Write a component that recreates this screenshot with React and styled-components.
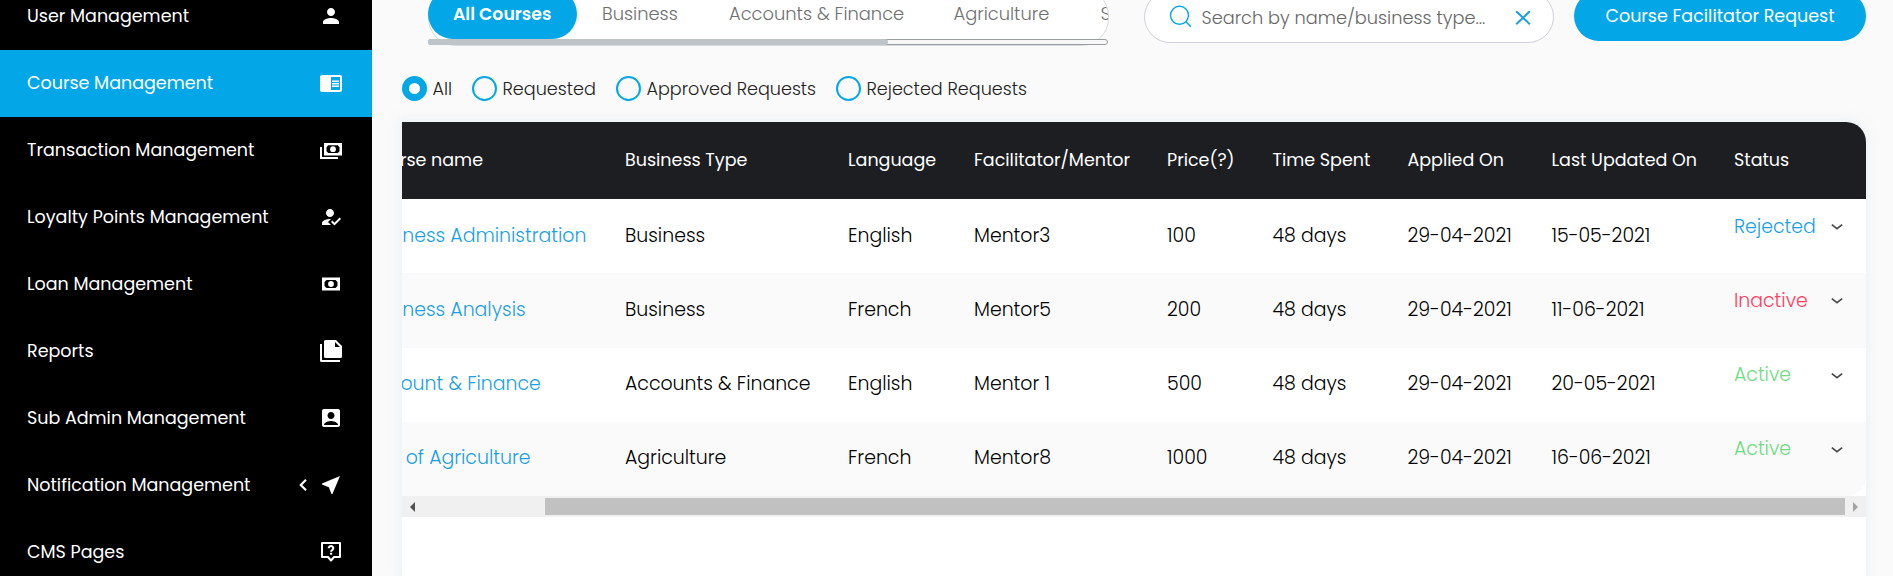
import React from "react";
import styled, { createGlobalStyle } from "styled-components";
import { MdPerson, MdChromeReaderMode, MdHowToReg, MdAccountBox, MdNearMe } from "react-icons/md";

const GlobalStyle = createGlobalStyle`
  * { box-sizing: border-box; }
  body { margin: 0; background: #fafafa; font-family: Poppins, Inter, "Open Sans", sans-serif; }
`;

const Text = styled.span`
  white-space: pre;
`;

const Page = styled.div`
  display: flex;
  width: 100%;
  height: 576px;
  overflow: hidden;
  background: #fafafa;
`;

const Sidebar = styled.nav`
  flex: 0 0 372px;
  background: #000;
  overflow: hidden;
`;

const MenuList = styled.div`
  display: flex;
  flex-direction: column;
  margin-top: -17px;
`;

const MenuItem = styled.a`
  display: flex;
  align-items: center;
  flex-shrink: 0;
  height: 67px;
  padding: 0 29px 2px 27px;
  color: #fff;
  font-size: 17.5px;
  background: ${(p) => (p.$active ? "#03a7e8" : "transparent")};
  svg { display: block; }
`;

const MenuIcons = styled.span`
  display: flex;
  align-items: center;
  gap: 10px;
  margin-left: auto;
`;

const Main = styled.main`
  display: flex;
  flex-direction: column;
  flex: 1;
  min-width: 0;
  padding: 0 27px 0 30px;
`;

const Toolbar = styled.div`
  display: flex;
  align-items: flex-start;
  flex: 0 0 88px;
  margin-top: -12px;
  padding-left: 26px;
`;

const TabsBox = styled.div`
  display: flex;
  flex-direction: column;
  width: 681px;
  height: 58px;
  border: 1px solid #d5d8dc;
  border-radius: 28px;
  background: #fff;
`;

const Tabs = styled.div`
  display: flex;
  height: 50px;
  margin-left: -1px;
  overflow: hidden;
  border-radius: 0 27px 0 0;
`;

const Tab = styled.button`
  flex: none;
  width: ${(p) => p.$w}px;
  height: 50px;
  padding: 0 0 1px 25px;
  border: 0;
  border-radius: 25px;
  text-align: left;
  font-family: inherit;
  font-size: ${(p) => (p.$active ? 17.3 : 17.85)}px;
  font-weight: ${(p) => (p.$active ? 600 : 300)};
  color: ${(p) => (p.$active ? "#fff" : "#6f6f6f")};
  background: ${(p) => (p.$active ? "#03a7e8" : "transparent")};
`;

const TabTrack = styled.div`
  flex: none;
  width: 680px;
  height: 6px;
  margin-left: -1px;
  border: 1px solid #9b9ea0;
  border-radius: 3px;
  background: #f7f7f7;
`;

const TabThumb = styled.div`
  width: 460px;
  height: 6px;
  margin: -1px 0 0 -1px;
  border-radius: 3px;
  background: #bfc4c8;
`;

const SearchBox = styled.label`
  display: flex;
  align-items: center;
  width: 410px;
  height: 52px;
  margin: 3px 0 0 35px;
  padding: 0 22px 0 24px;
  border: 1px solid #ced0da;
  border-radius: 26px;
  background: #fff;
  color: #666;
  font-size: 17.75px;
  font-weight: 300;
  svg { display: block; flex: none; }
`;

const SearchHint = styled(Text)`
  flex: 1;
  margin-left: 8.5px;
`;

const RequestButton = styled.button`
  width: 292px;
  height: 50px;
  margin: 3px 0 0 20px;
  padding: 0;
  border: 0;
  border-radius: 25px;
  background: #03a7e8;
  color: #fff;
  font-family: inherit;
  font-size: 17.5px;
`;

const Filters = styled.div`
  display: flex;
  height: 46px;
`;

const Filter = styled.label`
  display: flex;
  align-items: center;
  height: 25px;
  width: ${(p) => p.$w}px;
  gap: 5.5px;
  color: #222;
  font-size: 17.6px;
  font-weight: 300;
`;

const Radio = styled.span`
  flex: none;
  width: 25px;
  height: 25px;
  border-radius: 50%;
  border: ${(p) => (p.$on ? "7.5px" : "2px")} solid #03a7e8;
  background: ${(p) => (p.$on ? "#fff" : "transparent")};
`;

const Card = styled.section`
  flex: 1;
  background: #fff;
  border-radius: 0 20px 0 0;
  box-shadow: 0 0 8px 3px rgba(225, 238, 246, 0.5);
`;

const TableClip = styled.div`
  overflow: hidden;
  border-radius: 0 20px 20px 0;
`;

const Table = styled.div`
  width: 1502px;
  margin-left: -38px;
`;

const Row = styled.div`
  display: grid;
  grid-template-columns: 261px 223px 126px 193px 105.5px 135px 144px 182.5px 1fr;
  align-items: center;
  height: 74.25px;
  padding-bottom: 2px;
  background: ${(p) => (p.$alt ? "#fafafa" : "#fff")};
  color: #000;
  font-size: 18.9px;
  font-weight: 300;
`;

const HeadRow = styled(Row)`
  height: 77px;
  background: #1d1e22;
  color: #fff;
  font-size: 17.5px;
  font-weight: 400;
`;

const CourseLink = styled(Text)`
  margin-left: 1px;
  color: #1a9fe4;
`;

const Status = styled.div`
  display: flex;
  align-items: center;
  justify-content: space-between;
  padding: 0 23px 18px 0;
  color: ${(p) => p.$color};
  svg { display: block; margin-top: 2px; }
`;

const ScrollBar = styled.div`
  display: flex;
  align-items: center;
  height: 21px;
  padding: 0 8px;
  background: #f0f0f0;
`;

const ScrollThumb = styled.div`
  width: 1300px;
  height: 17px;
  margin-left: 130px;
  background: #c1c1c1;
`;

const Arrow = styled.span`
  width: 0;
  height: 0;
  border: 5px solid transparent;
  border-left-width: ${(p) => (p.$left ? 0 : 5)}px;
  border-right-width: ${(p) => (p.$left ? 5 : 0)}px;
  border-${(p) => (p.$left ? "right" : "left")}-color: ${(p) => (p.$left ? "#505050" : "#a3a3a3")};
  margin-left: ${(p) => (p.$left ? 0 : 8)}px;
`;

const CashIcon = () => (
  <svg width="24" height="24" viewBox="0 0 24 24" fill="#fff">
    <path fillRule="evenodd" d="M3 5.5h18v13H3z M7.5 8L5.5 10v4l2 2h9l2-2v-4l-2-2z" />
    <circle cx="12" cy="12" r="2.9" />
  </svg>
);

const CashStackIcon = () => (
  <svg width="24" height="24" viewBox="0 0 24 24" fill="#fff">
    <path fillRule="evenodd" d="M5 5h18v12.5H5z M9.2 7.3L7.5 9.2v4l1.7 1.9h9.6l1.7-1.9v-4l-1.7-1.9z" />
    <circle cx="14" cy="11.2" r="2.9" />
    <path d="M1 9h2v10h16v2H1z" />
  </svg>
);

const FilesIcon = () => (
  <svg width="24" height="24" viewBox="0 0 24 24" fill="#fff">
    <path fillRule="evenodd" d="M6.5 1H17l6 6v10.5a1.5 1.5 0 0 1-1.5 1.5h-15A1.5 1.5 0 0 1 5 17.5V2.5A1.5 1.5 0 0 1 6.5 1z M16 3v5h5z" />
    <path d="M1 5h2v16h18v2H2.5A1.5 1.5 0 0 1 1 21.5z" />
  </svg>
);

const HelpIcon = () => (
  <svg width="24" height="24" viewBox="0 0 24 24" fill="none" stroke="#fff">
    <path strokeWidth="2" strokeLinejoin="round" d="M3 3h18v14h-6l-3 3.5-3-3.5H3z" />
    <path strokeWidth="2.1" d="M9.7 8.3a2.3 2.1 0 1 1 3.8 1.5c-.9.7-1.4 1-1.4 1.9M12.1 12.8v2" />
  </svg>
);

const BackIcon = () => (
  <svg width="12" height="14" viewBox="0 0 12 14" fill="none" stroke="#fff" strokeWidth="2.2">
    <path d="M9 1.8 3.8 7 9 12.2" />
  </svg>
);

const SearchIcon = () => (
  <svg width="24" height="24" viewBox="0 0 24 24" fill="none" stroke="#03a7e8" strokeWidth="1.4">
    <circle cx="10.5" cy="10.3" r="9" />
    <path d="m16.9 16.7 5 5" />
  </svg>
);

const ClearIcon = () => (
  <svg width="16" height="16" viewBox="0 0 16 16" fill="none" stroke="#1a9fe4" strokeWidth="2">
    <path d="m1.2 2.2 13.6 13M14.8 2.2 1.2 15.2" />
  </svg>
);

const ChevronIcon = () => (
  <svg width="12" height="8" viewBox="0 0 12 8" fill="none" stroke="#4a4a4a" strokeWidth="1.7">
    <path d="m.8 1.6 5.2 4 5.2-4" />
  </svg>
);

const MENU = [
  ["User Management", <MdPerson size={24} />],
  ["Course Management", <MdChromeReaderMode size={24} />],
  ["Transaction Management", <CashStackIcon />],
  ["Loyalty Points Management", <MdHowToReg size={24} />],
  ["Loan Management", <CashIcon />],
  ["Reports", <FilesIcon />],
  ["Sub Admin Management", <MdAccountBox size={24} />],
  ["Notification Management", <MdNearMe size={24} />],
  ["CMS Pages", <HelpIcon />],
];

const TABS = [
  ["All Courses", 149],
  ["Business", 127],
  ["Accounts & Finance", 224.5],
  ["Agriculture", 147],
  ["Services", 140],
];

const FILTERS = [
  ["All", 70],
  ["Requested", 144],
  ["Approved Requests", 220],
  ["Rejected Requests", 200],
];

const HEADERS = [
  "Course name",
  "Business Type",
  "Language",
  "Facilitator/Mentor",
  "Price(?)",
  "Time Spent",
  "Applied On",
  "Last Updated On",
  "Status",
];

const STATUS_COLORS = { Rejected: "#1a9fe4", Inactive: "#ff3d60", Active: "#6fdc82" };

const ROWS = [
  ["Business Administration", "Business", "English", "Mentor3", "100", "48 days", "29-04-2021", "15-05-2021", "Rejected"],
  ["Business Analysis", "Business", "French", "Mentor5", "200", "48 days", "29-04-2021", "11-06-2021", "Inactive"],
  ["Account & Finance", "Accounts & Finance", "English", "Mentor 1", "500", "48 days", "29-04-2021", "20-05-2021", "Active"],
  ["Arts of Agriculture", "Agriculture", "French", "Mentor8", "1000", "48 days", "29-04-2021", "16-06-2021", "Active"],
];

export default function App() {
  return (
    <Page>
      <GlobalStyle />
      <Sidebar>
        <MenuList>
          {MENU.map(([label, icon]) => (
            <MenuItem key={label} $active={label === "Course Management"}>
              <Text>{label}</Text>
              <MenuIcons>
                {label === "Notification Management" && <BackIcon />}
                {icon}
              </MenuIcons>
            </MenuItem>
          ))}
        </MenuList>
      </Sidebar>
      <Main>
        <Toolbar>
          <TabsBox>
            <Tabs>
              {TABS.map(([label, w], i) => (
                <Tab key={label} $active={i === 0} $w={w}>
                  <Text>{label}</Text>
                </Tab>
              ))}
            </Tabs>
            <TabTrack>
              <TabThumb />
            </TabTrack>
          </TabsBox>
          <SearchBox>
            <SearchIcon />
            <SearchHint>Search by name/business type...</SearchHint>
            <ClearIcon />
          </SearchBox>
          <RequestButton>Course Facilitator Request</RequestButton>
        </Toolbar>
        <Filters>
          {FILTERS.map(([label, w], i) => (
            <Filter key={label} $w={w}>
              <Radio $on={i === 0} />
              <Text>{label}</Text>
            </Filter>
          ))}
        </Filters>
        <Card>
          <TableClip>
            <Table>
              <HeadRow>
                {HEADERS.map((label) => (
                  <Text key={label}>{label}</Text>
                ))}
              </HeadRow>
              {ROWS.map(([course, ...rest], i) => {
                const status = rest.pop();
                return (
                  <Row key={course} $alt={i % 2 === 1}>
                    <CourseLink>{course}</CourseLink>
                    {rest.map((value, j) => (
                      <Text key={j}>{value}</Text>
                    ))}
                    <Status $color={STATUS_COLORS[status]}>
                      <Text>{status}</Text>
                      <ChevronIcon />
                    </Status>
                  </Row>
                );
              })}
            </Table>
          </TableClip>
          <ScrollBar>
            <Arrow $left />
            <ScrollThumb />
            <Arrow />
          </ScrollBar>
        </Card>
      </Main>
    </Page>
  );
}
